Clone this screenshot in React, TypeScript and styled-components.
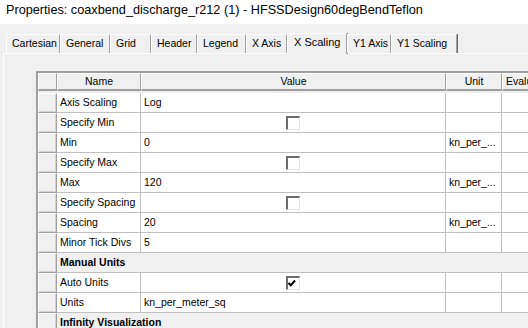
import styled, { createGlobalStyle, css } from "styled-components";

const GlobalStyle = createGlobalStyle`
  html, body {
    margin: 0;
    padding: 0;
    background: #f0f0f0;
    overflow: hidden;
  }
  body {
    font-family: "Liberation Sans", Arial, sans-serif;
  }
`;

const Window = styled.div`
  width: 528px;
  height: 328px;
  overflow: hidden;
  background: #f0f0f0;
  display: flex;
  flex-direction: column;
`;

const TitleBar = styled.div`
  height: 24px;
  box-sizing: border-box;
  background: #ffffff;
  padding: 2px 0 0 6px;
  font-size: 12.7px;
  line-height: 16px;
  color: #000;
  white-space: nowrap;
`;

const TabStrip = styled.div`
  display: flex;
  align-items: flex-end;
  height: 21px;
  margin-top: 8px;
  padding-left: 6px;
  position: relative;
  z-index: 1;
`;

const Tab = styled.div<{ $active?: boolean; $w: number }>`
  width: ${(p) => p.$w}px;
  height: 19px;
  box-sizing: border-box;
  font-size: 10.5px;
  line-height: 17px;
  padding-left: 5px;
  color: #000;
  background: #f0f0f0;
  border-top: 1px solid #ffffff;
  border-left: 1px solid #ffffff;
  border-right: 1px solid #a0a0a0;
  box-shadow: 1px 0 0 #696969;
  ${(p) =>
    p.$active &&
    css`
      height: 21px;
      margin-bottom: -1px;
      line-height: 16px;
      font-size: 11px;
      padding-left: 6px;
      border-bottom: 1px solid #f0f0f0;
    `}
`;

const Panel = styled.div`
  flex: 1;
  margin-left: 3px;
  border-top: 1px solid #ffffff;
  border-left: 1px solid #ffffff;
  padding: 17px 0 0 32px;
  overflow: hidden;
`;

const Grid = styled.div`
  display: grid;
  grid-template-columns: 19px 84px 305px 56px 60px;
  grid-auto-rows: 20px;
  border-top: 2px solid #a0a0a0;
  border-left: 2px solid #a0a0a0;
  width: max-content;
  font-size: 10.5px;
  color: #000;
`;

const HeaderCell = styled.div<{ $center?: boolean }>`
  box-sizing: border-box;
  height: 18px;
  background: #f0f0f0;
  border-top: 1px solid #ffffff;
  border-left: 1px solid #ffffff;
  border-right: 1px solid #a0a0a0;
  border-bottom: 2px solid #a0a0a0;
  line-height: 15px;
  text-align: ${(p) => (p.$center ? "center" : "left")};
  padding-left: ${(p) => (p.$center ? 0 : 3)}px;
  white-space: nowrap;
  overflow: hidden;
`;

const RowHead = styled.div`
  box-sizing: border-box;
  background: #f0f0f0;
  border-top: 1px solid #ffffff;
  border-left: 1px solid #ffffff;
  border-right: 1px solid #a0a0a0;
  border-bottom: 1px solid #a0a0a0;
  box-shadow: inset -1px -1px 0 #d4d4d4;
`;

const Cell = styled.div<{ $center?: boolean }>`
  box-sizing: border-box;
  background: #ffffff;
  border-right: 1px solid #c0c0c0;
  border-bottom: 1px solid #c0c0c0;
  line-height: 19px;
  padding-left: ${(p) => (p.$center ? 0 : 3)}px;
  white-space: nowrap;
  overflow: hidden;
  display: flex;
  align-items: center;
  justify-content: ${(p) => (p.$center ? "center" : "flex-start")};
`;

const SectionCell = styled.div`
  grid-column: 2 / span 4;
  box-sizing: border-box;
  background: #f0f0f0;
  border-bottom: 1px solid #c0c0c0;
  line-height: 19px;
  padding-left: 3px;
  font-weight: bold;
  white-space: nowrap;
`;

const CheckBox = styled.span`
  width: 14px;
  height: 14px;
  box-sizing: border-box;
  margin-right: 1px;
  border-top: 2px solid #6d6d6d;
  border-left: 2px solid #6d6d6d;
  border-right: 1px solid #e3e3e3;
  border-bottom: 1px solid #e3e3e3;
  background: #ffffff;
  display: flex;
  align-items: center;
  justify-content: flex-start;
`;

type Row =
  | { kind: "prop"; name: string; value?: string; check?: boolean; unit?: string }
  | { kind: "section"; name: string };

const rows: Row[] = [
  { kind: "prop", name: "Axis Scaling", value: "Log" },
  { kind: "prop", name: "Specify Min", check: false },
  { kind: "prop", name: "Min", value: "0", unit: "kn_per_..." },
  { kind: "prop", name: "Specify Max", check: false },
  { kind: "prop", name: "Max", value: "120", unit: "kn_per_..." },
  { kind: "prop", name: "Specify Spacing", check: false },
  { kind: "prop", name: "Spacing", value: "20", unit: "kn_per_..." },
  { kind: "prop", name: "Minor Tick Divs", value: "5" },
  { kind: "section", name: "Manual Units" },
  { kind: "prop", name: "Auto Units", check: true },
  { kind: "prop", name: "Units", value: "kn_per_meter_sq" },
  { kind: "section", name: "Infinity Visualization" },
];

const tabs = [
  { label: "Cartesian", w: 54 },
  { label: "General", w: 50 },
  { label: "Grid", w: 41 },
  { label: "Header", w: 46 },
  { label: "Legend", w: 49 },
  { label: "X Axis", w: 41 },
  { label: "X Scaling", w: 60, active: true },
  { label: "Y1 Axis", w: 44 },
  { label: "Y1 Scaling", w: 66 },
];

function Check({ on }: { on: boolean }) {
  return (
    <CheckBox>
      {on && (
        <svg width="9" height="9" viewBox="0 0 9 9">
          <path d="M0.5 4 L2.8 6.3 L7 1.5" stroke="#000" strokeWidth="2" fill="none" />
        </svg>
      )}
    </CheckBox>
  );
}

export default function App() {
  return (
    <>
      <GlobalStyle />
      <Window>
        <TitleBar>Properties: coaxbend_discharge_r212 (1) - HFSSDesign60degBendTeflon</TitleBar>
        <TabStrip>
          {tabs.map((t) => (
            <Tab key={t.label} $w={t.w} $active={t.active}>
              {t.label}
            </Tab>
          ))}
        </TabStrip>
        <Panel>
          <Grid>
            <HeaderCell />
            <HeaderCell $center>Name</HeaderCell>
            <HeaderCell $center>Value</HeaderCell>
            <HeaderCell $center>Unit</HeaderCell>
            <HeaderCell>Evaluated</HeaderCell>
            {rows.map((r, i) =>
              r.kind === "section" ? (
                <SectionRow key={i} name={r.name} />
              ) : (
                <PropRow key={i} row={r} />
              )
            )}
          </Grid>
        </Panel>
      </Window>
    </>
  );
}

function SectionRow({ name }: { name: string }) {
  return (
    <>
      <RowHead />
      <SectionCell>{name}</SectionCell>
    </>
  );
}

function PropRow({ row }: { row: Extract<Row, { kind: "prop" }> }) {
  return (
    <>
      <RowHead />
      <Cell>{row.name}</Cell>
      {row.check !== undefined ? (
        <Cell $center>
          <Check on={row.check} />
        </Cell>
      ) : (
        <Cell>{row.value}</Cell>
      )}
      <Cell>{row.unit}</Cell>
      <Cell />
    </>
  );
}
